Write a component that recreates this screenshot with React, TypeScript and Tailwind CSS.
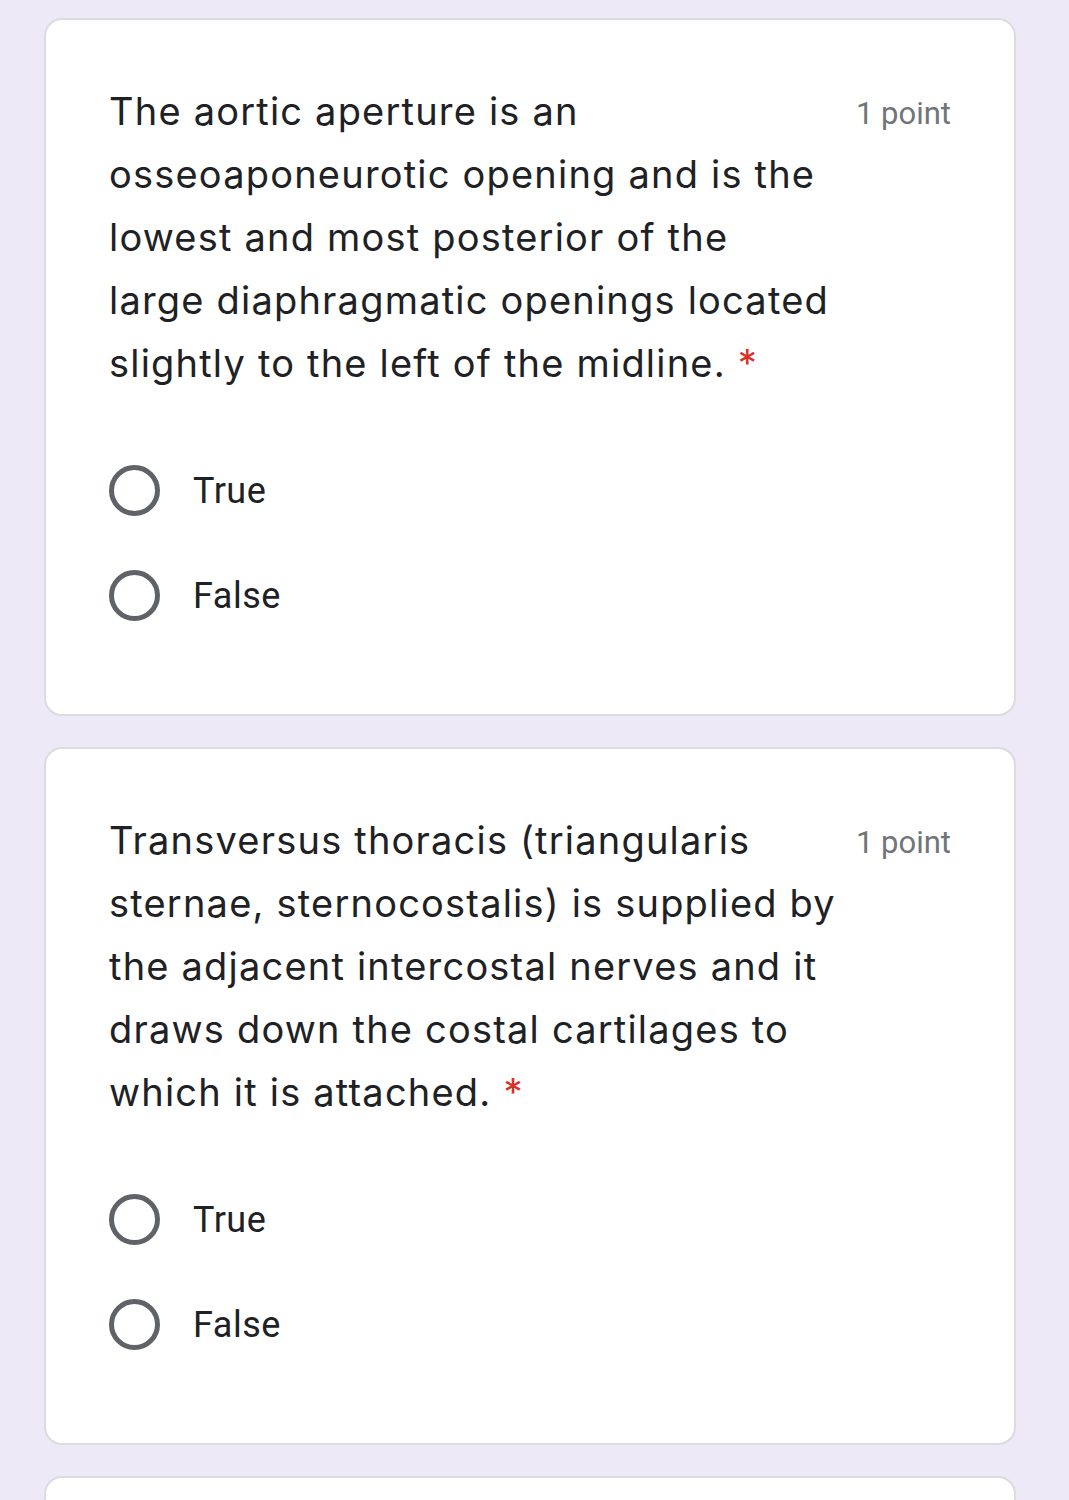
const questions = [
  {
    lines: [
      "The aortic aperture is an",
      "osseoaponeurotic opening and is the",
      "lowest and most posterior of the",
      "large diaphragmatic openings located",
      "slightly to the left of the midline.",
    ],
  },
  {
    lines: [
      "Transversus thoracis (triangularis",
      "sternae, sternocostalis) is supplied by",
      "the adjacent intercostal nerves and it",
      "draws down the costal cartilages to",
      "which it is attached.",
    ],
  },
];

function Radio({ label }: { label: string }) {
  return (
    <label className="flex h-[105px] items-center">
      <span className="block h-[51px] w-[51px] rounded-full border-[5px] border-[#5f6368]" />
      <span className="ml-[33px] font-['Roboto',sans-serif] text-[36px] tracking-[0.5px] text-[#202124]">
        {label}
      </span>
    </label>
  );
}

function QuestionCard({ lines }: { lines: string[] }) {
  return (
    <section className="rounded-[18px] border-2 border-[#dadce0] bg-white pt-[60px] pr-[63px] pb-[66px] pl-[63px]">
      <div className="flex items-start justify-between">
        <h2 className="font-['Inter',sans-serif] text-[38px] leading-[63px] tracking-[1.2px] text-[#202124]">
          {lines.map((line, i) => (
            <span key={i} className="block whitespace-nowrap">
              {line}
              {i === lines.length - 1 && (
                <span className="ml-[12px] text-[#d93025]">*</span>
              )}
            </span>
          ))}
        </h2>
        <span className="mt-[16px] font-['Roboto',sans-serif] text-[31px] leading-[36px] text-[#70757a]">
          1 point
        </span>
      </div>
      <div className="mt-[43px] flex flex-col">
        <Radio label="True" />
        <Radio label="False" />
      </div>
    </section>
  );
}

export default function App() {
  return (
    <main className="h-[1500px] overflow-hidden bg-[#ede9f7] px-[44px] pt-[18px]">
      <div className="flex w-[972px] flex-col gap-[31px]">
        {questions.map((q, i) => (
          <QuestionCard key={i} lines={q.lines} />
        ))}
        <section className="h-[80px] rounded-t-[18px] border-2 border-b-0 border-[#dadce0] bg-white" />
      </div>
    </main>
  );
}
